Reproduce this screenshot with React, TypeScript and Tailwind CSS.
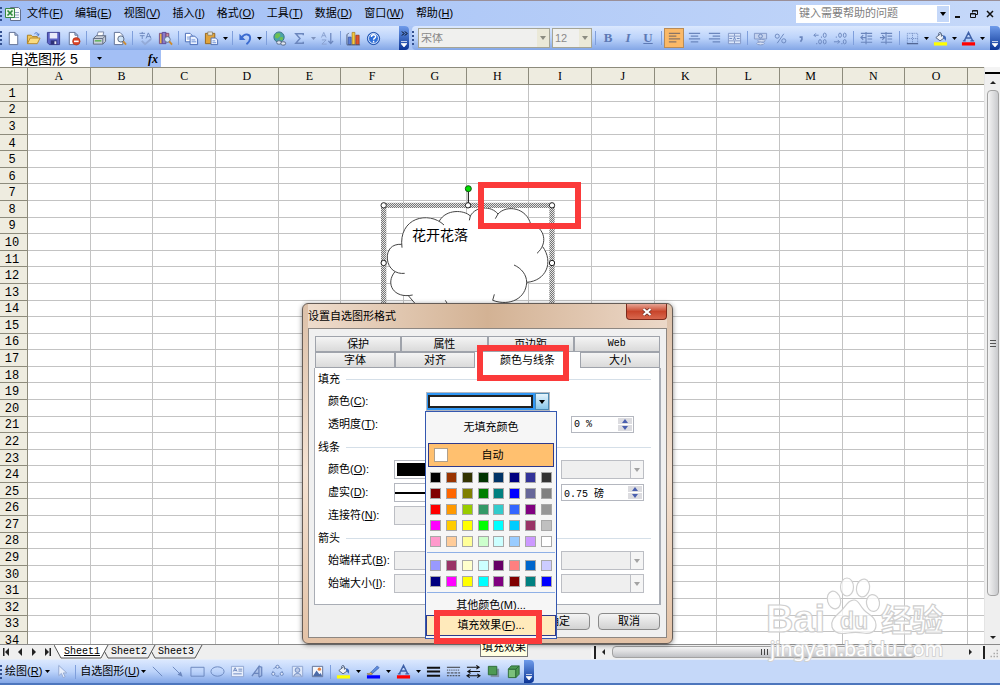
import React from "react";

const COLUMNS = "ABCDEFGHIJKLMNO".split("");
const ROWS = Array.from({ length: 34 }, (_, i) => i + 1);

const PALETTE = [
  "#000000", "#993300", "#333300", "#003300", "#003366", "#000080", "#333399", "#333333",
  "#800000", "#ff6600", "#808000", "#008000", "#008080", "#0000ff", "#666699", "#808080",
  "#ff0000", "#ff9900", "#99cc00", "#339966", "#33cccc", "#3366ff", "#800080", "#969696",
  "#ff00ff", "#ffcc00", "#ffff00", "#00ff00", "#00ffff", "#00ccff", "#993366", "#c0c0c0",
  "#ff99cc", "#ffcc99", "#ffff99", "#ccffcc", "#ccffff", "#99ccff", "#cc99ff", "#ffffff",
];
const CHART_PALETTE = [
  "#9999ff", "#993366", "#ffffcc", "#ccffff", "#660066", "#ff8080", "#0066cc", "#ccccff",
  "#000080", "#ff00ff", "#ffff00", "#00ffff", "#800080", "#800000", "#008080", "#0000ff",
];

const MUTED = "#6b86bd";

const ICONS: Record<string, React.ReactNode> = {
  new: (
    <path d="M3.500 1.500h6l3 3v10h-9zM9.500 1.500v3h3" fill="#fdfeff" stroke="#5f6f93" />
  ),
  open: (
    <>
      <path d="M1.500 13.500v-9h4l1.500 1.500h5v2" fill="#f2c75c" stroke="#a97d1c" />
      <path d="M1.500 13.500l3-6h10.500l-3 6z" fill="#fbdc80" stroke="#b5862a" />
      <path d="M9 3c2-2 4-1 4 1m-1.500-.5l1.500 1.500l1-2" fill="none" stroke="#3d6bc0" />
    </>
  ),
  save: (
    <>
      <path d="M1.500 1.500h13v13h-11l-2-2z" fill="#5a62c4" stroke="#373b8e" />
      <path d="M4 2h8v6H4z" fill="#e9ecfb" />
      <path d="M5 10h7v4.500H5z" fill="#2e3278" />
      <path d="M9 11h2v3H9z" fill="#e9ecfb" />
    </>
  ),
  permission: (
    <>
      <path d="M3.500 1.500h6l3 3v10h-9zM9.500 1.500v3h3" fill="#fdfeff" stroke="#5f6f93" />
      <circle cx="11" cy="11" r="4" fill="#dc4426" stroke="#a82a12" strokeWidth=".6" />
      <path d="M8.500 10.200h5v1.700h-5z" fill="#fff" />
    </>
  ),
  print: (
    <>
      <path d="M5 6l1.500-5h6L11.500 6z" fill="#fff" stroke="#7785a5" />
      <path d="M1.500 8l3-3h10v6l-3 3h-10z" fill="#c9d0dc" stroke="#5d6980" />
      <path d="M1.500 8h10l3-3M11.500 8v6" fill="none" stroke="#5d6980" />
      <path d="M3 10.500h7" stroke="#59b050" strokeWidth="1.500" />
    </>
  ),
  preview: (
    <>
      <path d="M2.500 1.500h6l3 3v10h-9z" fill="#fdfeff" stroke="#5f6f93" />
      <circle cx="9.500" cy="8.500" r="3.300" fill="#cfe4f7" stroke="#56647f" />
      <path d="M12 11l3 3.500" stroke="#c98c38" strokeWidth="2" />
    </>
  ),
  spell: (
    <>
      <path d="M1.500 2.500h6M4.500 1v2M2 5h5M4.500 5v3.500M8.500 8l2.500-6 3 6M9.500 6h4" fill="none" stroke={MUTED} />
      <path d="M4 10.500l3.500 3.500L14 8.500" fill="none" stroke="#94abd8" strokeWidth="2" />
    </>
  ),
  research: (
    <>
      <path d="M1.500 2.500h3v11h-3z" fill="#e8b54a" stroke="#7a4f85" />
      <path d="M4.500 1.500h4v12h-4z" fill="#8b7bc8" stroke="#5b4a99" />
      <path d="M8.500 2.500h3v9h-3z" fill="#cc8a9d" stroke="#7b4a73" />
      <circle cx="10" cy="9" r="3" fill="#d5e7fa" stroke="#5c6c8b" />
      <path d="M12 11l3 3.500" stroke="#cd8b2d" strokeWidth="2" />
    </>
  ),
  copy: (
    <>
      <path d="M1.500 2.500h5l2 2v7h-7z" fill="#fff" stroke="#466ab5" />
      <path d="M6.500 5.500h5l3 3v6h-8z" fill="#e9f1ff" stroke="#466ab5" />
      <path d="M3 6.500h3M3 8.500h3M8 9.500h4M8 11.500h5" stroke="#6b8fd6" />
    </>
  ),
  paste: (
    <>
      <path d="M1.500 2.500h10v11h-10z" fill="#e0a33b" stroke="#95651a" />
      <path d="M4 1h5v3.500H4z" fill="#e6e6de" stroke="#77715e" strokeWidth=".7" />
      <path d="M7.500 7.500h5l2 2v5h-7z" fill="#f2f6ff" stroke="#4e6fb3" />
      <path d="M9 10.500h3M9 12.500h4" stroke="#6b8fd6" />
    </>
  ),
  undo: (
    <>
      <path d="M4 7c3-5 9-4 9 .5 0 3-2 5-4 6.500" fill="none" stroke="#3c6cd0" strokeWidth="2" />
      <path d="M1.500 3v6.500H8z" fill="#3c6cd0" />
    </>
  ),
  link: (
    <>
      <circle cx="7.500" cy="6.500" r="5.500" fill="#4aa5a8" stroke="#3b7183" />
      <path d="M4 3l4-1 1 3-3 3-3-1zM9 6l3 1-1 3-3-1z" fill="#6ec150" />
      <rect x="5" y="10.500" width="5" height="3.500" rx="1.700" fill="#dfe6f0" stroke="#566784" />
      <rect x="9.500" y="11.500" width="5" height="3.500" rx="1.700" fill="#dfe6f0" stroke="#566784" />
    </>
  ),
  sum: <path d="M12 4.500V3H4l4.500 5L4 13h8v-1.500" fill="none" stroke={MUTED} strokeWidth="1.500" />,
  sort: (
    <>
      <path d="M1.500 7l2.500-5.500L6.500 7M2.500 5h3M2 9.500h4.500L2 14h5" fill="none" stroke="#8aa1cf" />
      <path d="M11.500 2v11M9 10.500l2.500 3 2.500-3" fill="none" stroke={MUTED} strokeWidth="1.300" />
    </>
  ),
  chart: (
    <>
      <path d="M1 14.500V4l2-2" fill="none" stroke="#4e5a76" />
      <path d="M2.500 6.500h3v8h-3z" fill="#5b7ed5" stroke="#2e4a94" strokeWidth=".7" />
      <path d="M6.500 1.500h3v13h-3z" fill="#f6c93d" stroke="#9c741a" strokeWidth=".7" />
      <path d="M10.500 4.500h3.500v10h-3.500z" fill="#e0552f" stroke="#8c2b12" strokeWidth=".7" />
      <path d="M1 14.800h14" stroke="#4e5a76" />
    </>
  ),
  help: (
    <>
      <circle cx="8" cy="8" r="6.500" fill="#2f6fd8" stroke="#1e4da6" />
      <circle cx="8" cy="8" r="5.300" fill="none" stroke="#fff" strokeWidth=".9" />
      <path d="M5.800 6.300c0-3 4.500-3 4.500-.2 0 1.600-2.200 1.500-2.200 3.300M8.100 10.500v1.700" fill="none" stroke="#fff" strokeWidth="1.500" />
    </>
  ),
  left: <path d="M2 2.500h12M2 5.500h8M2 8.500h12M2 11.500h8" stroke="#8a7466" strokeWidth="1.300" />,
  center: <path d="M2 2.500h12M4 5.500h8M2 8.500h12M4 11.500h8" stroke={MUTED} strokeWidth="1.300" />,
  right: <path d="M2 2.500h12M6 5.500h8M2 8.500h12M6 11.500h8" stroke={MUTED} strokeWidth="1.300" />,
  merge: (
    <>
      <path d="M1.500 2.500h13v11h-13zM1.500 5.500h13M1.500 10.500h13M8 2.500v3M8 10.500v3" fill="#dbe6fa" stroke="#8298c6" />
      <path d="M2.500 8h3M10.500 8h3M7 9.500l1-3 1 3" fill="none" stroke={MUTED} />
    </>
  ),
  currency: (
    <>
      <path d="M1.500 2.500h13v6h-13z" fill="#c4d2ee" stroke="#8298c6" />
      <circle cx="8" cy="5.500" r="2" fill="none" stroke={MUTED} />
      <ellipse cx="9" cy="10.500" rx="4" ry="1.500" fill="#d6e0f3" stroke="#8298c6" />
      <ellipse cx="8" cy="13.300" rx="4" ry="1.500" fill="#d6e0f3" stroke="#8298c6" />
    </>
  ),
  percent: (
    <>
      <circle cx="4.500" cy="5.500" r="2.200" fill="none" stroke={MUTED} />
      <circle cx="11.500" cy="10.500" r="2.200" fill="none" stroke={MUTED} />
      <path d="M11.500 3l-7 10" stroke={MUTED} />
    </>
  ),
  comma: <path d="M7 6.500h2.500V9L8 11.500" fill="none" stroke={MUTED} strokeWidth="1.700" />,
  decInc: (
    <>
      <path d="M1 4.500h5M3 2.500l-2 2 2 2" fill="none" stroke={MUTED} />
      <path d="M8.500 6.500h1M3.500 13.500h1" stroke={MUTED} strokeWidth="1.400" />
      <ellipse cx="12.500" cy="4.500" rx="1.600" ry="2.300" fill="none" stroke={MUTED} />
      <ellipse cx="7.500" cy="11.500" rx="1.500" ry="2.300" fill="none" stroke={MUTED} />
      <ellipse cx="12.500" cy="11.500" rx="1.500" ry="2.300" fill="none" stroke={MUTED} />
    </>
  ),
  decDec: (
    <>
      <path d="M1 11.500h6M5 9.500l2 2-2 2" fill="none" stroke={MUTED} />
      <path d="M3 6.500h1M9 13.500h1" stroke={MUTED} strokeWidth="1.400" />
      <ellipse cx="7.500" cy="4.500" rx="1.500" ry="2.300" fill="none" stroke={MUTED} />
      <ellipse cx="12.500" cy="4.500" rx="1.500" ry="2.300" fill="none" stroke={MUTED} />
      <ellipse cx="12.500" cy="11.500" rx="1.500" ry="2.300" fill="none" stroke={MUTED} />
    </>
  ),
  outdent: <path d="M2 2.500h12M9 5.500h5M9 8.500h5M2 12h12M7 7H2M4.500 4.500L2 7l2.500 2.500M7.500 1v13" fill="none" stroke={MUTED} strokeWidth="1.200" />,
  indent: <path d="M2 2.500h12M9 5.500h5M9 8.500h5M2 12h12M1 7h5M3.500 4.500L6 7 3.500 9.500M7.500 1v13" fill="none" stroke={MUTED} strokeWidth="1.200" />,
  border: (
    <>
      <path d="M2.500 13V2.500h11V13M8 2.500V13M2.500 8h11" fill="none" stroke={MUTED} strokeDasharray="1 1" />
      <path d="M2 13.500h12" stroke="#4f6390" strokeWidth="1.300" />
    </>
  ),
  fill: (
    <>
      <path d="M3 7l5-4 4.500 4-5 3.500z" fill="#eef2f8" stroke="#56657f" />
      <path d="M6 5c-1-4 3-5 3-1v2" fill="none" stroke="#56657f" />
      <path d="M11 4.500c3 .5 3.500 3 2.500 6-1-1-1.500-3-3-3.500z" fill="#3e69bb" />
      <path d="M1 12h14v3.500H1z" fill="#ffff00" />
    </>
  ),
  fontColor: (
    <>
      <path d="M3.500 10.500L8 1.500l4.500 9M5.500 7.500h5M2 10.500h3M10 10.500h4" fill="none" stroke="#3f61a8" strokeWidth="1.500" />
      <path d="M1 12h14v3.500H1z" fill="#ff0000" />
    </>
  ),
  lineColor: (
    <>
      <path d="M5 9l7-7 2 2-7 6z" fill="#5d8be0" stroke="#395c9f" strokeWidth=".7" />
      <path d="M5 9l2 1.500c-1.500 1.500-4 1-6 0 2 0 3-.5 4-1.500z" fill="#e6b65f" stroke="#7b5a23" strokeWidth=".6" />
      <path d="M1 12h14v3.500H1z" fill="#0000ff" />
    </>
  ),
  pointer: <path d="M4 1.500v11l2.800-2.500 2 4.500 2-1-2-4h3.700z" fill="#e7eefb" stroke="#93a7d0" />,
  line: <path d="M3 3l10 10" stroke={MUTED} />,
  arrow: <><path d="M3 3l8 8" stroke={MUTED} /><path d="M13.500 13.500l-5.500-2 3.500-3.500z" fill={MUTED} /></>,
  rect: <path d="M1 3.500h14v9.500h-14z" fill="none" stroke={MUTED} />,
  oval: <ellipse cx="8" cy="8" rx="7" ry="5" fill="none" stroke={MUTED} />,
  textbox: (
    <>
      <path d="M1.500 2.500h13v11h-13z" fill="#e8effc" stroke="#8fa5d0" />
      <path d="M3.500 8l2-4 2 4M4.500 7h2M9 5.500h4M9 7.500h4M3.500 10.500h9" fill="none" stroke={MUTED} />
    </>
  ),
  wordart: <path d="M2 13L9.500 2.500v11M4.500 10h5M9.500 2.500l3 1v9l-3 1.500" fill="#9fb3da" fillOpacity=".5" stroke={MUTED} strokeWidth="1.300" />,
  diagram: (
    <>
      <circle cx="8" cy="8" r="5" fill="none" stroke={MUTED} strokeDasharray="4 2" />
      <circle cx="8" cy="3" r="1.700" fill="#dce6f8" stroke={MUTED} />
      <circle cx="3.500" cy="10.500" r="1.700" fill="#dce6f8" stroke={MUTED} />
      <circle cx="12.500" cy="10.500" r="1.700" fill="#dce6f8" stroke={MUTED} />
    </>
  ),
  clipart: (
    <>
      <path d="M2.500 2.500h11v11h-11z" fill="#dde7f8" stroke="#8fa5d0" />
      <circle cx="8" cy="6.500" r="2.500" fill="#bccbe8" stroke={MUTED} />
      <path d="M4 13c1-4 7-4 8 0" fill="#bccbe8" stroke={MUTED} />
    </>
  ),
  picture: (
    <>
      <path d="M2.500 2.500h11v11h-11z" fill="#f3f6fc" stroke="#5d6f95" />
      <circle cx="10" cy="5.500" r="1.800" fill="#e5803c" />
      <path d="M3 13l4-6 3 4 1.500-1.500L13 13z" fill="#4c6ba8" />
    </>
  ),
  weights: <path d="M1 4h14M1 8h14M1 12.500h14" stroke="#111" strokeWidth="2" />,
  dashes: <><path d="M1 3.500h14" stroke="#333" /><path d="M1 6.500h14" stroke="#333" strokeDasharray="1 1" /><path d="M1 9.500h14" stroke="#333" strokeDasharray="3 1" /><path d="M1 12.500h14" stroke="#333" strokeDasharray="2 1" /></>,
  arrows: (
    <path d="M1 3.500h13M11 1.500l3 2-3 2M2 8h13M5 6l-3 2 3 2M1 12.500h14M4 10.500l-3 2 3 2M12 10.500l3 2-3 2" fill="none" stroke="#111" strokeWidth="1.200" />
  ),
  shadow: <><path d="M5 5h9v9H5z" fill="#8191a8" /><path d="M2.500 2.500h9v9h-9z" fill="#4e9a54" stroke="#2c6b35" /></>,
  cube: (
    <>
      <path d="M2.500 5.500h8v9h-8z" fill="#7cc17c" stroke="#2c6b35" />
      <path d="M2.500 5.500l3-3.500h8.500l-3.500 3.500zM10.500 5.500L14 2v9l-3.500 3.500z" fill="#4e9a54" stroke="#2c6b35" />
    </>
  ),
};

function Tool({ icon, label, active }: { icon: string; label: string; active?: boolean }) {
  return (
    <button
      type="button"
      aria-label={label}
      className={
        active
          ? "flex h-5 w-5 shrink-0 items-center justify-center border border-[#b98b56] bg-[#fbb967]"
          : "flex h-5 w-5 shrink-0 items-center justify-center"
      }
    >
      <svg viewBox="0 0 16 16" className="h-[15px] w-[15px] shrink-0">{ICONS[icon]}</svg>
    </button>
  );
}

function Letter({ children, label, className }: { children: string; label: string; className: string }) {
  return (
    <button type="button" aria-label={label} className={`w-5 shrink-0 font-['Liberation_Serif',serif] text-[13px] leading-5 text-[#5d79b4] ${className}`}>
      {children}
    </button>
  );
}

function Caret({ muted, wide }: { muted?: boolean; wide?: boolean }) {
  return (
    <button type="button" aria-label="更多" className={wide ? "flex h-5 w-[10px] shrink-0 items-center justify-center" : "flex h-5 w-2 shrink-0 items-center justify-center"}>
      <svg viewBox="0 0 5 3" className="h-[3px] w-[5px]"><path d="M0 0h5L2.500 3z" fill={muted ? "#7f93bd" : "#000"} /></svg>
    </button>
  );
}

function Sep() {
  return <span className="flex w-[6px] shrink-0 justify-center"><span className="h-[14px] w-px bg-[#7f9fdc]" /></span>;
}

function Grip() {
  return (
    <svg viewBox="0 0 3 14" className="h-[14px] w-[3px] shrink-0">
      <path d="M1 0v14" stroke="#33508f" strokeWidth="2" strokeDasharray="2 2" />
    </svg>
  );
}

function Overflow({ double }: { double?: boolean }) {
  return (
    <button type="button" aria-label="工具栏选项" className="flex h-full w-[10px] shrink-0 flex-col items-center justify-end gap-[5px] rounded-r bg-gradient-to-b from-[#6f9bea] to-[#0c3495] pb-[3px]">
      {double && <svg viewBox="0 0 7 5" className="h-[5px] w-[7px]"><path d="M1 .5l2 2-2 2M4 .5l2 2-2 2" fill="none" stroke="#000" /></svg>}
      <svg viewBox="0 0 6 6" className="h-[6px] w-[6px]"><path d="M0 .5h6M0 2.500h6L3 6z" fill="#fff" stroke="#fff" strokeWidth=".7" /></svg>
    </button>
  );
}

function Key({ text, k, tail = "" }: { text: string; k: string; tail?: string }) {
  return <>{text}(<u>{k}</u>){tail}</>;
}

function MenuBar() {
  const menus = [["文件", "F"], ["编辑", "E"], ["视图", "V"], ["插入", "I"], ["格式", "O"], ["工具", "T"], ["数据", "D"], ["窗口", "W"], ["帮助", "H"]];
  return (
    <header className="flex h-[26px] shrink-0 items-center border-t border-[#9a8f98] bg-gradient-to-r from-[#9fbdf5] to-[#c5d8f9]">
      <Grip />
      <svg viewBox="0 0 18 16" className="ml-px h-4 w-[18px]">
        <path d="M6.500 1.500h8l2 2v11h-10z" fill="#f6f8fb" stroke="#63708d" />
        <path d="M9 6.500h6M9 9h6M9 11.500h6" stroke="#90a0bd" />
        <path d="M1.500 2.500h9v9h-9z" fill="#e9f5e7" stroke="#388844" />
        <path d="M3.500 4.500l5 5M8.500 4.500l-5 5" stroke="#2f8a3c" strokeWidth="1.700" />
      </svg>
      <nav className="ml-[5px] flex gap-3">
        {menus.map(([t, k]) => (
          <button type="button" key={k} className="whitespace-nowrap"><Key text={t} k={k} /></button>
        ))}
      </nav>
      <div className="ml-auto flex h-[18px] items-center border border-white bg-white">
        <input aria-label="键入需要帮助的问题" placeholder="键入需要帮助的问题" className="h-4 w-[140px] bg-white pl-[2px] text-[11px] text-black outline-none placeholder:text-[#808080]" />
        <button type="button" aria-label="帮助选项" className="flex h-4 w-3 items-center justify-center bg-[#c5d8f9]">
          <svg viewBox="0 0 6 4" className="h-1 w-[6px]"><path d="M0 0h6L3 4z" /></svg>
        </button>
      </div>
      <div className="flex w-[50px] items-center justify-around pr-[2px]">
        <button type="button" aria-label="最小化"><svg viewBox="0 0 8 8" className="h-2 w-2"><path d="M1 7h5" stroke="#111" strokeWidth="2" /></svg></button>
        <button type="button" aria-label="还原"><svg viewBox="0 0 8 8" className="h-2 w-2"><path d="M2.500 2.500v-2h5v4H6M.5 3.500h5v4h-5zM.5 4h5M2.500 1h5" fill="none" stroke="#111" /></svg></button>
        <button type="button" aria-label="关闭"><svg viewBox="0 0 8 8" className="h-2 w-2"><path d="M1 1l6 6M7 1L1 7" stroke="#111" strokeWidth="1.500" /></svg></button>
      </div>
    </header>
  );
}

function ToolbarCombo({ label, value, className }: { label: string; value: string; className: string }) {
  return (
    <span className={`relative shrink-0 ${className}`}>
      <select aria-label={label} disabled className="block h-[20px] w-full appearance-none border border-[#a5a596] bg-[#f0f0ee] pl-[2px] text-[11px] leading-none text-[#8b8b8b] opacity-100">
        <option>{value}</option>
      </select>
      <span className="pointer-events-none absolute inset-y-px right-px flex w-3 items-center justify-center bg-[#ebe9d8]">
        <svg viewBox="0 0 6 4" className="h-1 w-[6px]"><path d="M0 0h6L3 4z" fill="#8c8c80" /></svg>
      </span>
    </span>
  );
}

function Toolbars() {
  return (
    <div className="flex h-6 shrink-0 bg-[#a9c4f5]">
      <div className="flex w-[409px] shrink-0 items-center rounded-r bg-gradient-to-b from-[#dbe8fe] via-[#bcd3fa] to-[#83a6e6]">
        <Grip />
        <Tool icon="new" label="新建" /><Tool icon="open" label="打开" /><Tool icon="save" label="保存" /><Tool icon="permission" label="权限" />
        <Sep /><Tool icon="print" label="打印" /><Tool icon="preview" label="打印预览" />
        <Sep /><Tool icon="spell" label="拼写检查" /><Tool icon="research" label="信息检索" />
        <Sep /><Tool icon="copy" label="复制" /><Tool icon="paste" label="粘贴" /><Caret />
        <Sep /><Tool icon="undo" label="撤消" /><Caret />
        <Sep /><Tool icon="link" label="超链接" /><Tool icon="sum" label="自动求和" /><Caret muted /><Tool icon="sort" label="升序排序" />
        <Sep /><Tool icon="chart" label="图表向导" /><Tool icon="help" label="帮助" />
        <span className="ml-auto h-full"><Overflow double /></span>
      </div>
      <div className="ml-[3px] flex min-w-0 flex-1 items-center rounded-l bg-gradient-to-b from-[#dbe8fe] via-[#bcd3fa] to-[#83a6e6]">
        <Grip />
        <ToolbarCombo label="字体" value="宋体" className="ml-[3px] w-[132px]" />
        <ToolbarCombo label="字号" value="12" className="ml-[2px] w-10" />
        <Sep />
        <Letter label="加粗" className="font-bold">B</Letter>
        <Letter label="倾斜" className="font-bold italic">I</Letter>
        <Letter label="下划线" className="font-bold underline">U</Letter>
        <Sep /><Tool icon="left" label="左对齐" active /><Tool icon="center" label="居中" /><Tool icon="right" label="右对齐" /><Tool icon="merge" label="合并及居中" />
        <Sep /><Tool icon="currency" label="货币样式" /><Tool icon="percent" label="百分比样式" /><Tool icon="comma" label="千位分隔样式" /><Tool icon="decInc" label="增加小数位数" /><Tool icon="decDec" label="减少小数位数" />
        <Sep /><Tool icon="outdent" label="减少缩进量" /><Tool icon="indent" label="增加缩进量" />
        <Sep /><Tool icon="border" label="边框" /><Caret /><Tool icon="fill" label="填充颜色" /><Caret /><Tool icon="fontColor" label="字体颜色" /><Caret />
        <span className="ml-auto h-full"><Overflow /></span>
      </div>
    </div>
  );
}

function FormulaBar() {
  return (
    <div className="flex h-[17px] shrink-0 bg-white">
      <input aria-label="名称框" defaultValue="自选图形 5" className="w-[90px] bg-white pl-[10px] text-[14px] leading-4 outline-none" />
      <div className="flex w-[71px] items-center justify-between bg-[#a3bff5] pr-[3px] pl-[5px]">
        <Caret />
        <button type="button" aria-label="插入函数" className="font-['Liberation_Serif',serif] text-[12px] leading-4 font-bold italic">fx</button>
      </div>
      <input aria-label="编辑栏" className="min-w-0 flex-1 bg-white outline-none" />
    </div>
  );
}

function Sheet() {
  return (
    <table className="h-[582px] w-full table-fixed border-separate border-spacing-0 bg-white">
      <colgroup>
        <col className="w-7" />
        {COLUMNS.map((c) => <col key={c} />)}
        <col className="w-4" />
      </colgroup>
      <thead>
        <tr className="h-[18px] bg-[#eeece0] font-['Liberation_Serif',serif] text-[12px] leading-[15px]">
          <th className="border-t border-r border-b border-[#8d8b7c] p-0" />
          {COLUMNS.map((c) => <th key={c} className="border-t border-r border-b border-[#8d8b7c] p-0 pt-px font-normal">{c}</th>)}
          <th className="border-t border-b border-[#8d8b7c] p-0" />
        </tr>
      </thead>
      <tbody>
        {ROWS.map((r) => (
          <tr key={r}>
            <th className="border-r border-b border-[#8d8b7c] bg-[#eeece0] p-0 pt-[2px] pr-[3px] font-['Liberation_Mono',monospace] text-[12px] leading-[12px] font-normal">{r}</th>
            {COLUMNS.map((c) => <td key={c} className="border-r border-b border-[#c3c3c3] p-0" />)}
            <td className="border-b border-[#c3c3c3] p-0" />
          </tr>
        ))}
      </tbody>
    </table>
  );
}

function Triangle({ d, label }: { d: string; label: string }) {
  return (
    <button type="button" aria-label={label} className="flex h-3 w-3 shrink-0 items-center justify-center">
      <svg viewBox="0 0 8 8" className="h-2 w-2"><path d={d} fill="#222" /></svg>
    </button>
  );
}

function VerticalScroll() {
  return (
    <div className="flex w-4 shrink-0 flex-col items-center border-l border-[#e4e4e4] bg-[#efefef]">
      <span className="h-[7px] w-full border-b-2 border-black bg-[#f4f4f4]" />
      <span className="mt-[2px]"><Triangle label="向上滚动" d="M1 6h6L4 3z" /></span>
      <span className="mt-[2px] flex w-3 flex-1 items-center justify-center rounded-sm border border-[#a2a2a2] bg-gradient-to-r from-[#f4f4f4] to-[#c9cacd]">
        <svg viewBox="0 0 6 7" className="h-[7px] w-[6px]"><path d="M0 .5h6M0 3.500h6M0 6.500h6" stroke="#555" /></svg>
      </span>
      <span className="mt-9"><Triangle label="向下滚动" d="M1 2h6L4 5z" /></span>
    </div>
  );
}

function SheetTab({ children, active }: { children: string; active?: boolean }) {
  return (
    <button type="button" className="relative h-[14px] w-[47px] shrink-0 pl-1 text-left font-['Liberation_Mono',monospace] text-[10px] leading-[14px]">
      <svg viewBox="0 0 56 14" className="absolute top-0 -left-[6px] h-[14px] w-14">
        <path d="M0 0l7 13h40l7-13" fill={active ? "#fff" : "#efefef"} stroke="#555" />
      </svg>
      <span className={active ? "relative underline" : "relative"}>{children}</span>
    </button>
  );
}

function TabStrip() {
  return (
    <div className="flex h-[15px] shrink-0 items-center border-t border-[#8b8b8b] bg-[#efefef]">
      <div className="flex w-[54px] shrink-0 justify-between">
        <Triangle label="第一张工作表" d="M1 0h1.500v8H1zM7 0v8L3 4z" />
        <Triangle label="上一张工作表" d="M6 0v8L2 4z" />
        <Triangle label="下一张工作表" d="M2 0v8l4-4z" />
        <Triangle label="最后一张工作表" d="M1 0v8l4-4zM5.500 0H7v8H5.500z" />
      </div>
      <div className="ml-[6px] flex flex-row-reverse">
        <SheetTab>Sheet3</SheetTab>
        <SheetTab>Sheet2</SheetTab>
        <SheetTab active>Sheet1</SheetTab>
      </div>
      <div className="ml-auto flex h-full w-[409px] items-center">
        <span className="mr-px h-[13px] w-[5px] border-r-2 border-[#222] bg-[#f6f6f6]" />
        <Triangle label="向左滚动" d="M6 1v6L3 4z" />
        <span className="ml-[3px] flex h-3 w-[304px] items-center justify-center rounded-sm border border-[#a2a2a2] bg-gradient-to-b from-[#f6f6f6] to-[#bfc0c4]">
          <svg viewBox="0 0 7 6" className="h-[6px] w-[7px]"><path d="M.5 0v6M3.500 0v6M6.500 0v6" stroke="#444" /></svg>
        </span>
        <span className="ml-auto"><Triangle label="向右滚动" d="M2 1v6l3-3z" /></span>
        <span className="ml-[3px] h-[13px] w-[5px] border-r-2 border-[#222] bg-[#f6f6f6]" />
        <svg viewBox="0 0 14 12" className="h-3 w-[15px]"><path d="M5 10.500h9M8 7.500h6M11 4.500h3" stroke="#aaa" strokeWidth="1.500" strokeDasharray="1.500 1.500" /></svg>
      </div>
    </div>
  );
}

function DrawingBar() {
  return (
    <footer className="flex h-[26px] shrink-0 border-t border-b-2 border-t-[#e6edf9] border-b-[#4d76bd] bg-[#c5d8f9]">
      <div className="flex items-center rounded-r bg-gradient-to-b from-[#dbe8fe] via-[#bcd3fa] to-[#83a6e6]">
        <Grip />
        <button type="button" className="ml-[2px] whitespace-nowrap"><Key text="绘图" k="R" /></button><Caret wide />
        <Tool icon="pointer" label="选择对象" /><Sep />
        <button type="button" className="ml-[2px] whitespace-nowrap"><Key text="自选图形" k="U" /></button><Caret />
        <Tool icon="line" label="直线" /><Tool icon="arrow" label="箭头" /><Tool icon="rect" label="矩形" /><Tool icon="oval" label="椭圆" /><Tool icon="textbox" label="文本框" />
        <Tool icon="wordart" label="艺术字" /><Tool icon="diagram" label="组织结构图" /><Tool icon="clipart" label="剪贴画" /><Tool icon="picture" label="图片" />
        <Sep /><Tool icon="fill" label="填充颜色" /><Caret wide /><Tool icon="lineColor" label="线条颜色" /><Caret wide /><Tool icon="fontColor" label="字体颜色" /><Caret wide />
        <Tool icon="weights" label="线型" /><Tool icon="dashes" label="虚线线型" /><Tool icon="arrows" label="箭头样式" /><Tool icon="shadow" label="阴影样式" /><Tool icon="cube" label="三维效果样式" />
        <Overflow />
      </div>
    </footer>
  );
}

function CloudShape() {
  return (
    <div className="absolute top-[175px] left-[370px] h-[140px] w-[190px]">
      <svg viewBox="0 0 570 420" className="h-full w-full">
        <defs>
          <pattern id="hatch" width="6" height="6" patternUnits="userSpaceOnUse">
            <rect width="6" height="6" fill="#e4e4e4" />
            <path d="M0 0h3v3H0zM3 3h3v3H3z" fill="#777" />
          </pattern>
        </defs>
        <path d="M95 210C90 130 170 110 208 138C230 100 285 105 301 123C320 92 365 92 384 117C410 88 470 98 481 145C515 155 530 190 518 215C550 250 535 320 470 322C468 370 420 395 370 376L360 420H150L132 382L115 362C60 365 50 310 75 292C40 270 45 210 95 210Z" fill="#fff" />
        <g fill="none" stroke="#444" strokeWidth="3">
          <path d="M96 218C84 128 176 106 222 150" />
          <path d="M208 138C228 102 282 104 301 123L298 136" />
          <path d="M301 123C318 92 364 92 384 117L376 131" />
          <path d="M384 117C410 88 470 98 482 148" />
          <path d="M481 145C525 158 535 205 501 235" />
          <path d="M518 215C552 262 528 318 470 322C470 300 455 280 432 270" />
          <path d="M470 322C468 370 420 395 368 376L373 358" />
          <path d="M95 208C65 206 50 225 52 252C55 282 78 298 104 295" />
          <path d="M75 290C45 325 70 372 128 360" />
          <path d="M115 362L134 384M226 376L232 386" />
        </g>
        <path d="M41 91H546M41 91V420M546 91V420" fill="none" stroke="url(#hatch)" strokeWidth="16" />
        <path d="M295 48v36" stroke="#000" strokeWidth="3" />
        <circle cx="295" cy="41" r="9" fill="#00e000" stroke="#145214" strokeWidth="3" />
        <g fill="#fff" stroke="#222" strokeWidth="3">
          <circle cx="41" cy="91" r="8" /><circle cx="294" cy="91" r="8" /><circle cx="546" cy="91" r="8" />
          <circle cx="41" cy="264" r="8" /><circle cx="546" cy="264" r="8" />
        </g>
      </svg>
      <p className="absolute top-[50px] left-[42px] text-[14px] leading-5">花开花落</p>
    </div>
  );
}

function SectionTitle({ children }: { children: string }) {
  return (
    <div className="flex h-[22px] items-center gap-[6px]">
      <h3 className="shrink-0">{children}</h3>
      <span className="mr-2 h-px flex-1 bg-[#d5dfe8]" />
    </div>
  );
}

function DialogSelect({ id, label, className }: { id?: string; label?: string; className: string }) {
  return (
    <span className={`relative block ${className}`}>
      <select id={id} aria-label={label} disabled className="block h-[19px] w-full appearance-none border border-[#bcbec4] bg-[#efefef] opacity-100" />
      <span className="pointer-events-none absolute inset-y-0 right-0 flex w-[14px] items-center justify-center border border-[#bcbec4] bg-[#f5f5f5]">
        <svg viewBox="0 0 6 4" className="h-1 w-[6px]"><path d="M0 0h6L3 4z" fill="#a3a3a3" /></svg>
      </span>
    </span>
  );
}

function Spin({ id, label, value, className }: { id?: string; label?: string; value: string; className: string }) {
  return (
    <span className={`flex h-[17px] border border-[#b4b7bf] bg-white p-px ${className}`}>
      <input id={id} aria-label={label} defaultValue={value} className="min-w-0 flex-1 pl-px font-['Liberation_Mono','Noto_Sans_CJK_SC',monospace] text-[10px] leading-none outline-none" />
      <span className="flex w-[14px] flex-col gap-px">
        <button type="button" aria-label="增加" className="flex flex-1 items-center justify-center bg-[#dcdce0]"><svg viewBox="0 0 6 4" className="h-1 w-[6px]"><path d="M0 4h6L3 0z" fill="#4a5fae" /></svg></button>
        <button type="button" aria-label="减少" className="flex flex-1 items-center justify-center bg-[#dcdce0]"><svg viewBox="0 0 6 4" className="h-1 w-[6px]"><path d="M0 0h6L3 4z" fill="#4a5fae" /></svg></button>
      </span>
    </span>
  );
}

function Field({ id, text, k, children }: { id: string; text: string; k: string; children: React.ReactNode }) {
  return (
    <div className="flex h-[23px] items-center pl-[10px]">
      <label htmlFor={id} className="w-[66px] shrink-0 whitespace-nowrap"><Key text={text} k={k} tail=":" /></label>
      {children}
    </div>
  );
}

const TAB = "border border-[#9fa3ab] bg-gradient-to-b from-[#f4f4f4] to-[#dadada] leading-[14px]";

function FormatDialog() {
  return (
    <section role="dialog" aria-label="设置自选图形格式" className="absolute top-[303px] left-[302px] flex w-[371px] flex-col rounded-md border border-[#665d57] bg-gradient-to-b from-[#dcc0a8] via-[#f4e2d2] to-[#e3c2a6] px-[5px] pb-[5px] shadow-[0_1px_5px_rgba(0,0,0,0.45)]">
      <div className="flex h-6 justify-between bg-gradient-to-r from-[#eedccc] via-[#d3b294] to-[#ecd8c8]">
        <h2 className="leading-6">设置自选图形格式</h2>
        <button type="button" aria-label="关闭对话框" className="flex h-4 w-[41px] items-center justify-center rounded-b border border-t-0 border-[#7c2a1d] bg-gradient-to-b from-[#e6a494] via-[#c8452b] to-[#d8674d]">
          <svg viewBox="0 0 10 8" className="h-2 w-[10px]"><path d="M1.500 1l7 6M8.500 1l-7 6" stroke="#6a2a20" strokeWidth="3.500" /><path d="M1.500 1l7 6M8.500 1l-7 6" stroke="#fff" strokeWidth="2.200" /></svg>
        </button>
      </div>
      <div className="flex h-[310px] flex-col border border-[#8d8782] bg-[#f0f0f0] px-[6px] pt-[7px]">
        <div className="grid h-4 shrink-0 grid-cols-4">
          <button type="button" className={TAB}>保护</button>
          <button type="button" className={TAB}>属性</button>
          <button type="button" className={TAB}>页边距</button>
          <button type="button" className={`${TAB} font-['Liberation_Mono',monospace] text-[10px]`}>Web</button>
        </div>
        <div className="flex h-4 shrink-0">
          <button type="button" className={`${TAB} w-20`}>字体</button>
          <button type="button" className={`${TAB} w-20`}>对齐</button>
          <button type="button" className="w-[105px] bg-white leading-4">颜色与线条</button>
          <button type="button" className={`${TAB} flex-1`}>大小</button>
        </div>
        <div className="-mx-px shrink-0 border border-t-0 border-[#a9adb5] border-r-2 bg-white pb-[9px] pl-[3px]">
          <SectionTitle>填充</SectionTitle>
          <Field id="fill-color" text="颜色" k="C">
            <button id="fill-color" type="button" className="ml-8 flex h-[19px] w-[124px] border border-[#b4b7bf] bg-[#3097f5]">
              <span className="my-[2px] ml-px flex-1 border-2 border-[#222] bg-white" />
              <span className="ml-[2px] flex h-full w-[14px] items-center justify-center border border-[#4d8ab2] bg-gradient-to-b from-[#e5f4fc] to-[#89c7ea]">
                <svg viewBox="0 0 6 4" className="h-1 w-[6px]"><path d="M0 0h6L3 4z" /></svg>
              </span>
            </button>
          </Field>
          <Field id="opacity" text="透明度" k="T">
            <Spin id="opacity" value="0 %" className="ml-[177px] w-[63px]" />
          </Field>
          <SectionTitle>线条</SectionTitle>
          <Field id="line-color" text="颜色" k="O">
            <button id="line-color" type="button" className="h-[19px] w-20 border border-[#b4b7bf] bg-white p-[2px]"><span className="block h-full bg-black" /></button>
            <DialogSelect label="样式" className="ml-[87px] w-[83px]" />
          </Field>
          <Field id="dash" text="虚实" k="D">
            <button id="dash" type="button" className="flex h-[19px] w-20 items-center border border-[#b4b7bf] bg-white"><span className="h-[2px] w-full bg-black" /></button>
            <Spin label="粗细" value="0.75 磅" className="ml-[87px] w-[83px]" />
          </Field>
          <Field id="connector" text="连接符" k="N">
            <DialogSelect id="connector" className="w-20" />
          </Field>
          <SectionTitle>箭头</SectionTitle>
          <Field id="begin-style" text="始端样式" k="B">
            <DialogSelect id="begin-style" className="w-20" />
            <DialogSelect label="末端样式" className="ml-[87px] w-[83px]" />
          </Field>
          <Field id="begin-size" text="始端大小" k="I">
            <DialogSelect id="begin-size" className="w-20" />
            <DialogSelect label="末端大小" className="ml-[87px] w-[83px]" />
          </Field>
        </div>
        <div className="mt-2 flex justify-end gap-2">
          <button type="button" className="h-[17px] w-[62px] rounded-sm border border-[#8a8a8a] bg-gradient-to-b from-[#f4f4f4] to-[#d2d2d2] leading-[15px]">确定</button>
          <button type="button" className="h-[17px] w-[62px] rounded-sm border border-[#8a8a8a] bg-gradient-to-b from-[#f4f4f4] to-[#d2d2d2] leading-[15px]">取消</button>
        </div>
      </div>
    </section>
  );
}

function Swatches({ colors, className }: { colors: string[]; className: string }) {
  return (
    <div className={`grid auto-rows-fr grid-cols-8 place-items-center ${className}`}>
      {colors.map((c, i) => (
        <button key={i} type="button" aria-label={c} className="h-[11px] w-[11px] border border-[#a8a8a8]" style={{ backgroundColor: c }} />
      ))}
    </div>
  );
}

function ColorMenu() {
  return (
    <div className="absolute top-[411px] left-[425px] w-[132px] border border-[#3458b0] bg-[#f6f6f6] pb-[2px] text-center">
      <button type="button" className="block h-[31px] w-full leading-[31px]">无填充颜色</button>
      <button type="button" className="mx-[2px] flex h-6 w-[126px] items-center border border-[#2f3a8c] bg-[#ffc06f] pl-[5px]">
        <span className="h-[14px] w-[14px] border border-[#b0a08c] bg-white" />
        <span className="flex-1 pr-4">自动</span>
      </button>
      <Swatches colors={PALETTE} className="mx-[2px] mt-[3px] h-[79px]" />
      <hr className="mx-px mt-[3px] border-[#8fb0e6]" />
      <Swatches colors={CHART_PALETTE} className="mx-[2px] mt-1 h-8" />
      <hr className="mx-px mt-[3px] border-[#8fb0e6]" />
      <button type="button" className="block h-[22px] w-full pt-[2px] leading-5"><Key text="其他颜色" k="M" tail="..." /></button>
      <button type="button" className="block h-[21px] w-full border border-[#2f3a8c] bg-[#ffeabb] leading-[19px]"><Key text="填充效果" k="F" tail="..." /></button>
    </div>
  );
}

function Watermark() {
  return (
    <svg viewBox="0 0 185 90" className="pointer-events-none absolute top-[574px] left-[764px] h-[90px] w-[185px]">
      <g fill="#fff" fillOpacity=".75" stroke="#cfcfcf" strokeWidth="1.200">
        <text x="2" y="58" fontFamily="Liberation Sans, sans-serif" fontWeight="700" fontSize="38">Bai</text>
        <ellipse cx="70" cy="26" rx="6.500" ry="9" transform="rotate(-15 70 26)" />
        <ellipse cx="83" cy="13" rx="6.500" ry="9" />
        <ellipse cx="99" cy="14" rx="6.500" ry="9" transform="rotate(12 99 14)" />
        <ellipse cx="109" cy="29" rx="6.500" ry="8.500" transform="rotate(-8 109 29)" />
        <path d="M90 26c-6 0-8 6-13 11s-11 9-9 16 10 7 16 6 9-1 15 0 13 0 13-8-7-10-12-15-5-10-10-10z" />
        <text x="76" y="55" fontFamily="Liberation Sans, sans-serif" fontWeight="700" fontSize="23">du</text>
        <text x="117" y="57" fontFamily="Noto Sans CJK SC, sans-serif" fontWeight="700" fontSize="31">经验</text>
      </g>
      <g fontFamily="Noto Sans, sans-serif" fontSize="20">
        <text x="6" y="82" fill="#fff" stroke="#d2d2d2" strokeWidth="2" paintOrder="stroke" strokeLinejoin="round">jingyan.baidu.com</text>
      </g>
    </svg>
  );
}

export default function App() {
  return (
    <div className="relative flex h-screen flex-col overflow-hidden bg-[#c5d8f9] font-['Liberation_Sans','Noto_Sans_CJK_SC',sans-serif] text-[11px] text-black">
      <MenuBar />
      <Toolbars />
      <FormulaBar />
      <main className="flex min-h-0 flex-1">
        <div className="min-w-0 flex-1 overflow-hidden"><Sheet /></div>
        <VerticalScroll />
      </main>
      <TabStrip />
      <DrawingBar />
      <CloudShape />
      <Watermark />
      <FormatDialog />
      <div role="tooltip" className="absolute top-[638px] left-[480px] border border-[#777] bg-[#ffffe1] px-px leading-[17px]">填充效果</div>
      <ColorMenu />
      <div className="absolute top-[182px] left-[478px] h-[47px] w-[103px] border-[6px] border-[#fb3a3a]" />
      <div className="absolute top-[345px] left-[477px] h-[36px] w-[92px] border-[6px] border-[#fb3a3a]" />
      <div className="absolute top-[610px] left-[434px] h-[34px] w-[108px] border-[6px] border-[#fb3a3a]" />
    </div>
  );
}
